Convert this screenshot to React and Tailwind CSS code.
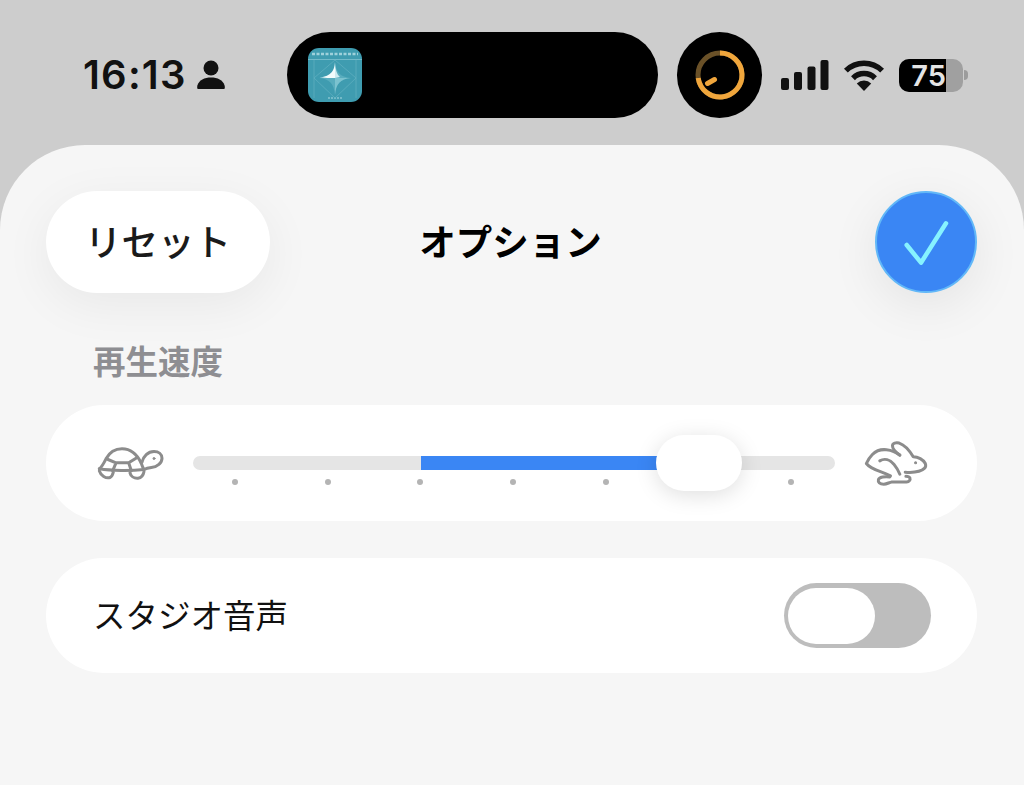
import React from 'react';

const jp = { fontFamily: '"Noto Sans CJK JP", "Noto Sans", sans-serif' };

function PersonIcon() {
  return (
    <svg width="28" height="30" viewBox="0 0 28 30" fill="#111" aria-hidden="true">
      <circle cx="14" cy="8" r="7.5" />
      <path d="M1 29c-1 0-1-2-0.6-3.5C2 20 7.5 17.5 14 17.5s12 2.5 13.6 8c.4 1.5.4 3.5-.6 3.5z" />
    </svg>
  );
}

function AppIcon() {
  return (
    <svg width="54" height="54" viewBox="0 0 54 54" className="rounded-[11px]" aria-hidden="true">
      <rect width="54" height="54" fill="#3f9cb0" />
      <path d="M4 6h46" stroke="#bfe3ea" strokeWidth="2.500" strokeDasharray="3 1.500" opacity="0.75" />
      <path d="M0 11.500h54" stroke="#7fc2cf" strokeWidth="0.8" />
      <path d="M20 50h14" stroke="#a9d8e0" strokeWidth="1.200" strokeDasharray="2 1" />
      <path d="M6 12v38M48 12v38M6 30l21-18 21 18-21 20z" stroke="#63b1c1" strokeWidth="0.7" fill="none" />
      <path d="M27 14c1 10 5 15 16 16-11 1-15 6-16 17-1-11-5-16-16-17 11-1 15-6 16-16z" fill="#59adbe" />
      <path d="M27 30h16c-11 1-15 6-16 17z" fill="#8acbd6" opacity="0.7" />
      <path d="M27 14c-.5 9-4 14-15 15.500 6 .5 15 .5 15 .5z" fill="#f2fbfc" />
      <path d="M27 14c.3 7 1.500 12 5 15l-5 1z" fill="#cdeaf0" />
    </svg>
  );
}

function TimerRing() {
  return (
    <svg width="56" height="56" viewBox="0 0 56 56" aria-hidden="true">
      <circle cx="28" cy="28" r="22" fill="none" stroke="#6a5128" strokeWidth="5" />
      <path d="M28 6A22 22 0 1 1 6.200 31" fill="none" stroke="#f0a63c" strokeWidth="5" />
      <path d="M15.500 36.500l7-4" stroke="#f0a63c" strokeWidth="5" strokeLinecap="round" />
    </svg>
  );
}

function SignalBars() {
  return (
    <svg width="48" height="30" viewBox="0 0 48 30" fill="#111" aria-hidden="true">
      <rect x="0" y="18" width="8" height="12" rx="2" />
      <rect x="13" y="12" width="8" height="18" rx="2" />
      <rect x="26.500" y="6.500" width="8" height="23.500" rx="2" />
      <rect x="39.500" y="0" width="8" height="30" rx="2" />
    </svg>
  );
}

function WifiIcon() {
  return (
    <svg width="42" height="31" viewBox="0 0 42 31" fill="none" stroke="#111" strokeWidth="5.500" aria-hidden="true">
      <path d="M2.900 10.600a26 26 0 0 1 36.200 0" />
      <path d="M10 18.200a15.500 15.500 0 0 1 22 0" />
      <path d="M21 31l-7.200-7.500a10 10 0 0 1 14.400 0z" fill="#111" stroke="none" />
    </svg>
  );
}

function Tortoise() {
  return (
    <svg width="70" height="37" viewBox="45 45 210 110" fill="none" stroke="#8c8c8c" strokeWidth="9" strokeLinecap="round" strokeLinejoin="round" aria-hidden="true">
      <path d="M58 116c8-6 12-14 20-30 10-18 28-30 48-30 26 0 46 18 58 44 2 6 4 12 8 18" />
      <path d="M58 116c36 6 96 6 134 2" />
      <path d="M84 88l24 10h38l22-14M108 98l-10 24M146 98l8 24" />
      <path d="M186 96c4-18 18-32 36-32 14 0 24 8 24 20 0 14-14 26-32 28-8 1-16 3-22 6" />
      <path d="M58 122c4 14 20 24 32 20 6-2 8-8 10-16" />
      <path d="M150 128c2 10 12 17 24 16 10-1 16-8 18-20" />
      <circle cx="222" cy="85" r="3" fill="#8c8c8c" strokeWidth="3" />
    </svg>
  );
}

function Hare() {
  return (
    <svg width="67" height="47" viewBox="40 30 200 140" fill="none" stroke="#8c8c8c" strokeWidth="9" strokeLinecap="round" strokeLinejoin="round" aria-hidden="true">
      <path d="M150 75c-10-8-22-14-40-16-18-2-32 4-42 14-8 8-14 18-18 27 6 8 24 18 44 25 12 4 20 8 28 12" />
      <path d="M150 75c-12-8-22-18-22-28 0-8 10-10 20-8 18 6 32 24 42 41 14 0 30 8 36 20 2 6 2 10-2 14-10 10-30 14-58 12" />
      <path d="M90 92c14-8 30-4 42 10 8 10 14 20 18 30" />
      <path d="M120 140c-14-2-32 0-34 8-2 8 4 14 16 14 10 0 16-6 24-7h44c8 0 12-6 10-12-2-4-6-5-12-5" />
      <circle cx="197" cy="98" r="3" fill="#8c8c8c" strokeWidth="3" />
    </svg>
  );
}

const ticks = [0, 1, 2, 3, 4, 5, 6];

export default function App() {
  return (
    <div className="flex h-[785px] w-[1024px] flex-col overflow-hidden bg-[#cdcdcd]" style={jp}>
      {/* Status bar */}
      <div className="flex h-[145px] shrink-0 items-start pt-[32px]">
        <div className="flex h-[86px] w-[287px] shrink-0 items-center pl-[83px]">
          <span className="text-[40px] font-semibold leading-none tracking-[1.2px] text-[#111]" style={{ fontFamily: 'Inter, sans-serif' }}>
            16:13
          </span>
          <span className="ml-[10px] flex"><PersonIcon /></span>
        </div>
        <div className="flex h-[86px] w-[371px] shrink-0 items-center rounded-full bg-black pl-[21px]">
          <AppIcon />
        </div>
        <div className="ml-[19px] flex h-[86px] w-[85px] shrink-0 items-center justify-center rounded-full bg-black">
          <TimerRing />
        </div>
        <div className="flex h-[86px] items-center">
          <span className="ml-[19px] flex"><SignalBars /></span>
          <span className="ml-[14px] flex"><WifiIcon /></span>
          <div className="ml-[14px] flex h-[33px] w-[64px] rounded-[10px] bg-[#a0a0a0]">
            <div className="flex w-[47px] items-center justify-end rounded-l-[10px] bg-black">
              <span className="text-[29px] font-semibold leading-none text-[#e4e4e4]" style={{ fontFamily: 'Inter, sans-serif' }}>75</span>
            </div>
          </div>
          <div className="ml-[1px] h-[10px] w-[4px] rounded-r-full bg-[#9c9c9c]" />
        </div>
      </div>

      {/* Options sheet */}
      <div className="flex-1 rounded-t-[85px] bg-[#f6f6f6] pl-[46px] pr-[47px] pt-[46px]">
        <header className="grid grid-cols-[1fr_auto_1fr] items-center">
          <button className="flex h-[102px] w-[224px] items-center justify-center rounded-full bg-white pb-[2px] text-[36.5px] font-medium text-[#1a1a1a] shadow-[0_12px_50px_rgba(0,0,0,0.06)]">
            リセット
          </button>
          <h1 className="pb-[2px] pr-[2px] text-[36.5px] font-bold text-black">オプション</h1>
          <button className="flex h-[102px] w-[102px] items-center justify-center justify-self-end rounded-full border-2 border-[#62b8f8] bg-[#3a86f4] shadow-[0_12px_50px_rgba(0,0,0,0.08)]">
            <svg width="102" height="102" viewBox="0 0 102 102" fill="none" stroke="#86f2ff" strokeWidth="4.500" strokeLinecap="round" strokeLinejoin="round" className="shrink-0" aria-hidden="true">
              <path d="M31.700 54L46 71.700 71 32.300" />
            </svg>
          </button>
        </header>

        <p className="mt-[46px] flex h-[48px] items-center pb-[6px] pl-[47px] text-[32.500px] font-bold leading-none text-[#8e8e92]">再生速度</p>

        {/* Playback speed */}
        <div className="mt-[18px] flex h-[116px] items-center rounded-full bg-white pl-[49px] pr-[47px]">
          <Tortoise />
          <div className="relative ml-[28px] h-[14px] flex-1 rounded-full bg-[#e5e5e5]">
            <div className="absolute bottom-0 left-[228px] top-0 w-[240px] bg-[#3a86f4]" />
            <div className="absolute left-[39px] right-[41px] top-[23px] flex justify-between">
              {ticks.map((t) => (
                <span key={t} className="h-[6px] w-[6px] rounded-full bg-[#b4b4b4]" />
              ))}
            </div>
            <div className="absolute left-[463px] top-[-21px] h-[56px] w-[86px] rounded-[28px] bg-white shadow-[0_4px_22px_rgba(0,0,0,0.13)]" />
          </div>
          <span className="ml-[28px] flex"><Hare /></span>
        </div>

        {/* Studio voice */}
        <div className="mt-[37px] flex h-[115px] items-center justify-between rounded-full bg-white pl-[47px] pr-[46px]">
          <span className="pb-[3px] text-[32.500px] leading-none text-[#111]">スタジオ音声</span>
          <div className="flex h-[65px] w-[147px] items-center rounded-full bg-[#bdbdbd] pl-[4px]">
            <div className="h-[56px] w-[87px] rounded-full bg-white" />
          </div>
        </div>
      </div>
    </div>
  );
}
